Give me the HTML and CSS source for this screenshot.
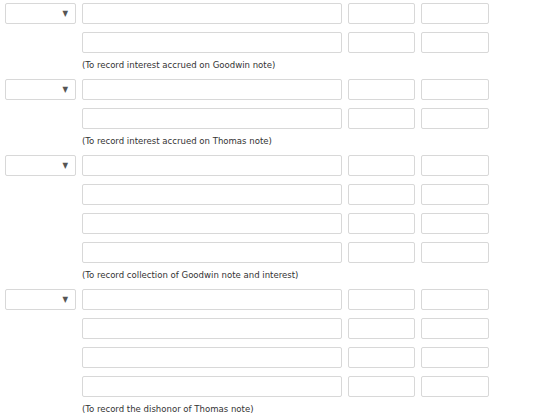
FILE: index.html
```html
<!DOCTYPE html>
<html>
<head>
<meta charset="utf-8">
<link rel="stylesheet" href="styles.css">
</head>
<body>
<div class="page">
  <div class="entry">
    <div class="row">
      <div class="select"><span class="arrow">▼</span></div>
      <div class="field acct"></div><div class="field amt"></div><div class="field amt"></div>
    </div>
    <div class="row">
      <div class="spacer"></div>
      <div class="field acct"></div><div class="field amt"></div><div class="field amt"></div>
    </div>
    <div class="caption">(To record interest accrued on Goodwin note)</div>
  </div>

  <div class="entry">
    <div class="row">
      <div class="select"><span class="arrow">▼</span></div>
      <div class="field acct"></div><div class="field amt"></div><div class="field amt"></div>
    </div>
    <div class="row">
      <div class="spacer"></div>
      <div class="field acct"></div><div class="field amt"></div><div class="field amt"></div>
    </div>
    <div class="caption">(To record interest accrued on Thomas note)</div>
  </div>

  <div class="entry">
    <div class="row">
      <div class="select"><span class="arrow">▼</span></div>
      <div class="field acct"></div><div class="field amt"></div><div class="field amt"></div>
    </div>
    <div class="row">
      <div class="spacer"></div>
      <div class="field acct"></div><div class="field amt"></div><div class="field amt"></div>
    </div>
    <div class="row">
      <div class="spacer"></div>
      <div class="field acct"></div><div class="field amt"></div><div class="field amt"></div>
    </div>
    <div class="row">
      <div class="spacer"></div>
      <div class="field acct"></div><div class="field amt"></div><div class="field amt"></div>
    </div>
    <div class="caption">(To record collection of Goodwin note and interest)</div>
  </div>

  <div class="entry">
    <div class="row">
      <div class="select"><span class="arrow">▼</span></div>
      <div class="field acct"></div><div class="field amt"></div><div class="field amt"></div>
    </div>
    <div class="row">
      <div class="spacer"></div>
      <div class="field acct"></div><div class="field amt"></div><div class="field amt"></div>
    </div>
    <div class="row">
      <div class="spacer"></div>
      <div class="field acct"></div><div class="field amt"></div><div class="field amt"></div>
    </div>
    <div class="row">
      <div class="spacer"></div>
      <div class="field acct"></div><div class="field amt"></div><div class="field amt"></div>
    </div>
    <div class="caption">(To record the dishonor of Thomas note)</div>
  </div>
</div>
</body>
</html>
```

FILE: styles.css
```css
html, body {
  margin: 0;
  padding: 0;
  background: #ffffff;
}
.page {
  padding: 3px 0 0 5px;
  font-family: "DejaVu Sans Condensed", "DejaVu Sans", sans-serif;
}
.entry {
  display: flex;
  flex-direction: column;
  gap: 8px;
  margin-bottom: 6px;
}
.row {
  display: flex;
  gap: 6px;
  height: 21px;
}
.select, .field {
  box-sizing: border-box;
  height: 21px;
  border: 1px solid #d8d8d8;
  border-radius: 2px;
  background: #fff;
}
.select {
  width: 71px;
  display: flex;
  align-items: center;
  justify-content: flex-end;
  padding-right: 7px;
}
.spacer {
  width: 71px;
}
.arrow {
  font-size: 8px;
  color: #555;
  line-height: 1;
}
.acct { width: 260px; }
.amt { width: 67px; }
.amt + .amt { width: 68px; }
.caption {
  margin-left: 77px;
  margin-top: -4px;
  font-size: 9.5px;
  line-height: 16px;
  color: #333;
}
```
